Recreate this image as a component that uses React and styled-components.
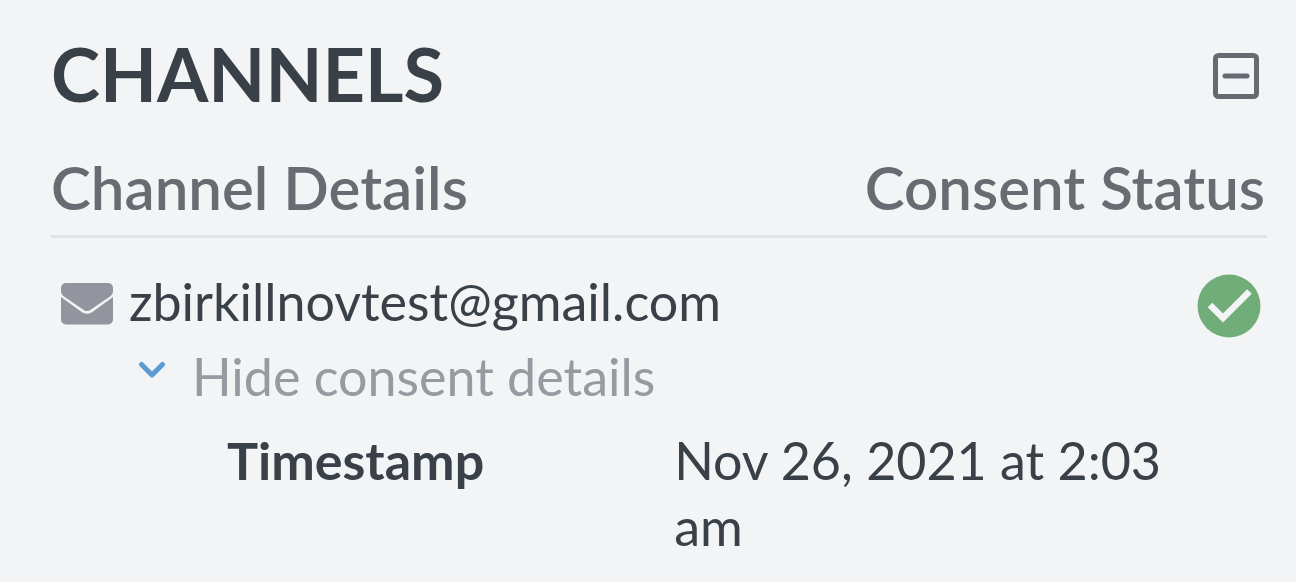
import { useState } from "react";
import styled, { createGlobalStyle } from "styled-components";

const GlobalStyle = createGlobalStyle`
  * {
    box-sizing: border-box;
  }
  body {
    margin: 0;
    background: #f2f4f6;
    color: #394047;
    font-family: Lato, "Open Sans", "Liberation Sans", sans-serif;
    font-size: 52px;
    line-height: 66px;
  }
`;

const channels = [
  {
    address: "zbirkillnovtest@gmail.com",
    timestamp: "Nov 26, 2021 at 2:03 am",
  },
];

const CollapseIcon = ({ open }) => (
  <svg width="48" height="48" viewBox="0 0 48 48" fill="none" stroke="currentColor" strokeWidth="5">
    <rect x="3.500" y="3.500" width="41" height="41" rx="3" />
    <path d="M13 24h22" strokeLinecap="round" />
    {!open && <path d="M24 13v22" strokeLinecap="round" />}
  </svg>
);

const MailIcon = () => (
  <svg width="54" height="42" viewBox="0 0 54 42" fill="#92959d">
    <path d="M6 0h42a5 5 0 0 1 5 5v3c0 2-1 4-3 5.500L31 26.500c-3 2-5 2-8 0L4 13.500C2 12 1 10 1 8V5a5 5 0 0 1 5-5z" />
    <path d="M1 14l20 14.500c4 3 8 3 12 0l20-14.500v22.500a5 5 0 0 1-5 5H6a5 5 0 0 1-5-5z" />
  </svg>
);

const CheckIcon = () => (
  <svg width="64" height="64" viewBox="0 0 64 64" role="img" aria-label="Consented">
    <circle cx="32" cy="32" r="31.500" fill="#70ad79" />
    <path d="M13 31l13 13L52.500 17.500" fill="none" stroke="#f2f4f6" strokeWidth="6.500" />
  </svg>
);

const ChevronIcon = () => (
  <svg width="28" height="18" viewBox="0 0 28 18" fill="none" stroke="#5b9bd0" strokeWidth="5" strokeLinecap="round" strokeLinejoin="round">
    <path d="M3.500 3.500l10.500 10.500L24.500 3.500" />
  </svg>
);

const App = () => {
  const [open, setOpen] = useState(true);
  return (
    <Panel>
      <GlobalStyle />
      <PanelHeader>
        <Title>CHANNELS</Title>
        <IconButton
          type="button"
          aria-label="Toggle channels"
          aria-expanded={open}
          onClick={() => setOpen(!open)}
        >
          <CollapseIcon open={open} />
        </IconButton>
      </PanelHeader>
      {open && (
        <Table>
          <thead>
            <tr>
              <HeadCell scope="col">Channel Details</HeadCell>
              <HeadCell scope="col" $align="right">Consent Status</HeadCell>
            </tr>
          </thead>
          {channels.map((channel) => (
            <Channel key={channel.address} channel={channel} />
          ))}
        </Table>
      )}
    </Panel>
  );
};

const Channel = ({ channel }) => {
  const [expanded, setExpanded] = useState(true);
  return (
    <tbody>
      <tr>
        <Cell>
          <Address>
            <MailIcon />
            {channel.address}
          </Address>
        </Cell>
        <Cell $align="right">
          <Status>
            <CheckIcon />
          </Status>
        </Cell>
      </tr>
      <tr>
        <td colSpan={2}>
          <DetailsToggle
            type="button"
            aria-expanded={expanded}
            onClick={() => setExpanded(!expanded)}
          >
            <ChevronIcon />
            {expanded ? "Hide consent details" : "Show consent details"}
          </DetailsToggle>
          {expanded && (
            <Details>
              <Term>Timestamp</Term>
              <Value>{channel.timestamp}</Value>
            </Details>
          )}
        </td>
      </tr>
    </tbody>
  );
};

const Panel = styled.section`
  padding: 36px 29px 20px 51px;
`;

const PanelHeader = styled.header`
  display: flex;
  align-items: flex-start;
  justify-content: space-between;
  padding-right: 7px;
  margin-bottom: 42px;
`;

const Title = styled.h2`
  margin: 0;
  font-size: 74px;
  font-weight: 700;
  line-height: 76px;
`;

const IconButton = styled.button`
  display: flex;
  margin-top: 16px;
  padding: 0;
  border: none;
  background: none;
  color: #666b72;
  cursor: pointer;
`;

const Table = styled.table`
  width: 100%;
  border-collapse: collapse;

  td {
    padding: 0;
  }
`;

const HeadCell = styled.th`
  padding: 0 2px 15px 0;
  border-bottom: 3px solid #e1e3e6;
  color: #666c72;
  font-size: 60px;
  font-weight: 600;
  text-align: ${({ $align }) => $align || "left"};
`;

const Cell = styled.td`
  && {
    padding-top: 30px;
    vertical-align: top;
  }
  text-align: ${({ $align }) => $align || "left"};
`;

const Address = styled.div`
  display: flex;
  align-items: center;
  gap: 15px;
  padding-left: 9px;

  svg {
    margin-top: 6px;
  }
`;

const Status = styled.div`
  display: flex;
  justify-content: flex-end;
  padding: 6px 6px 0 0;
`;

const DetailsToggle = styled.button`
  display: flex;
  align-items: center;
  gap: 26px;
  margin: 5px 0 18px 87px;
  padding: 0;
  border: none;
  background: none;
  color: #979aa1;
  font: inherit;
  cursor: pointer;

  svg {
    margin-bottom: 12px;
  }
`;

const Details = styled.dl`
  display: grid;
  grid-template-columns: 9fr 10fr;
  margin: 0;
  padding: 0 96px 0 176px;
`;

const Term = styled.dt`
  font-weight: 700;
`;

const Value = styled.dd`
  margin: 0;
`;

export default App;
